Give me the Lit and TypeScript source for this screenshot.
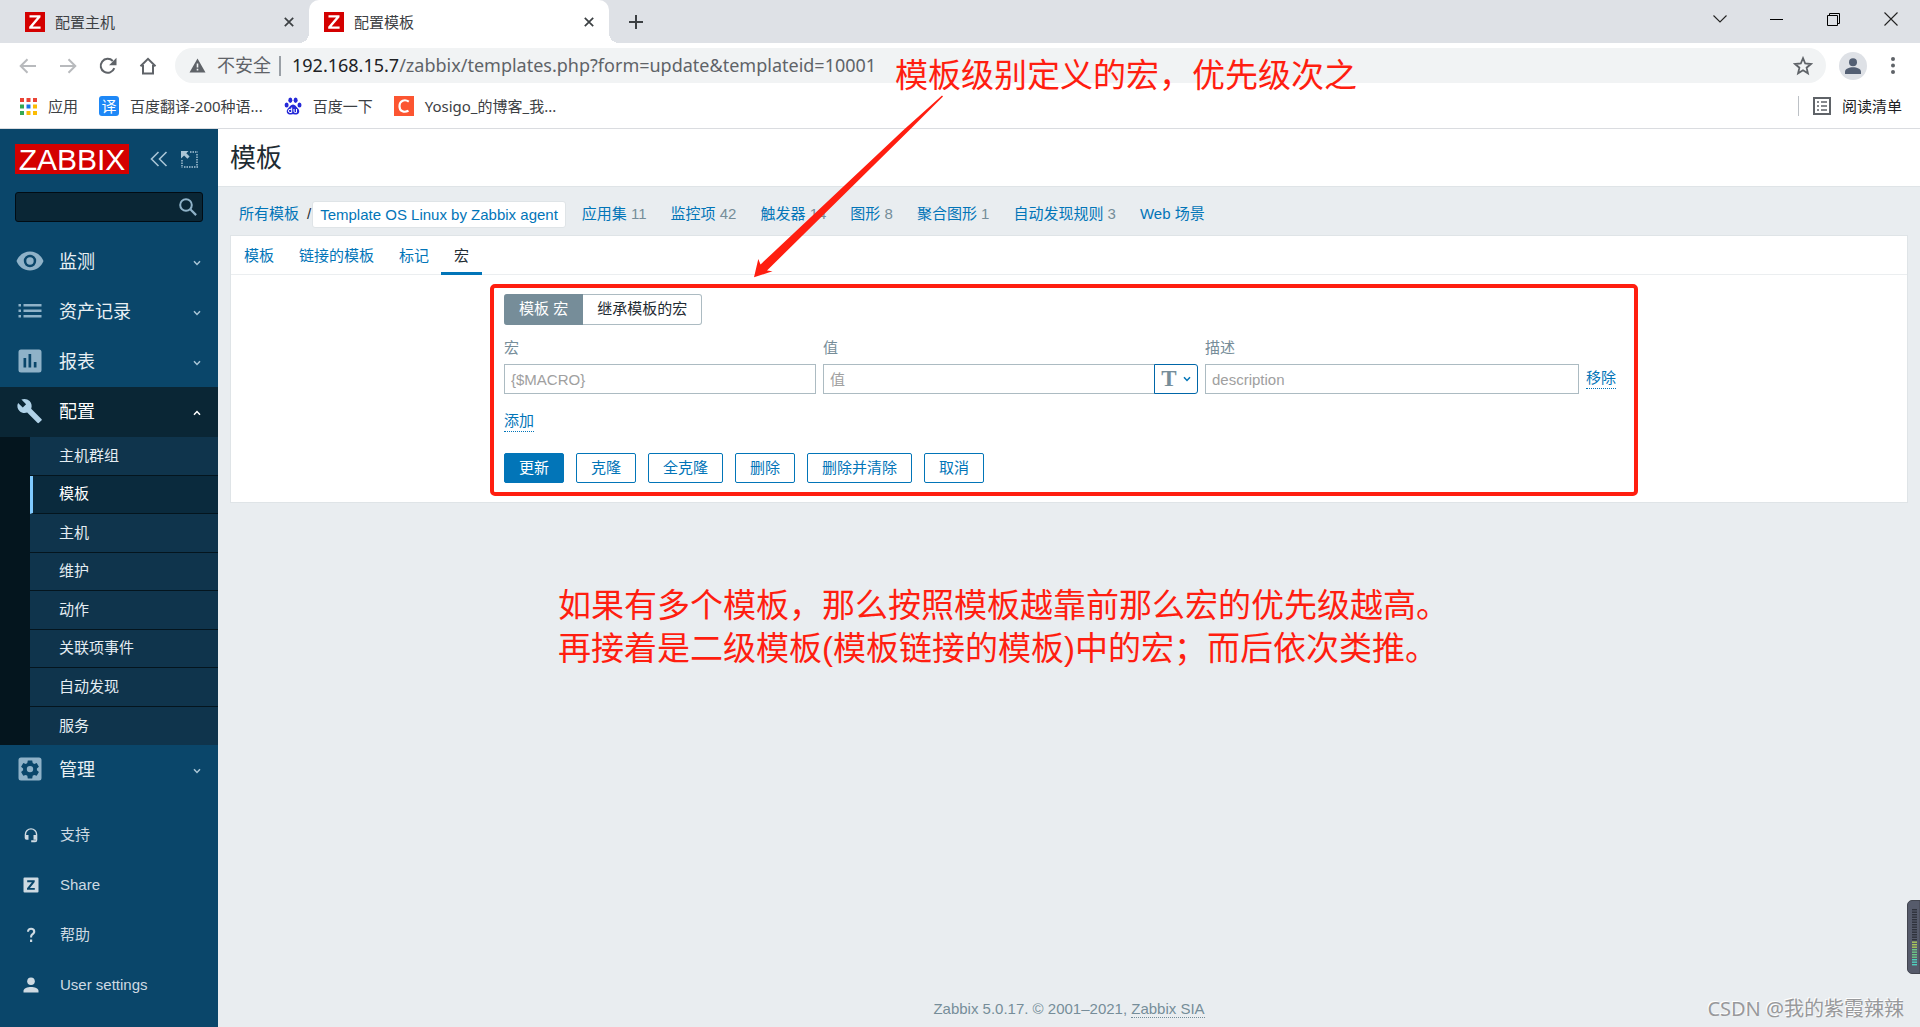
import { LitElement, html, css, svg } from "lit";
import { customElement, state } from "lit/decorators.js";
import { classMap } from "lit/directives/class-map.js";

const chevron = (up = false) => html`<svg class="chev" width="8" height="6" viewBox="0 0 8 6" aria-hidden="true">
  <path d=${up ? "M1 4.8 4 1.6 7 4.8" : "M1 1.2 4 4.4 7 1.2"} fill="none" stroke="currentColor" stroke-width="1.5" /></svg>`;

const menuIcons: Record<string, unknown> = {
  eye: svg`<path d="M14 4.5C8 4.5 2.7 8.300 .5 14c2.200 5.700 7.500 9.500 13.500 9.500S25.300 19.700 27.500 14C25.300 8.300 20 4.500 14 4.500Zm0 15.700a6.200 6.200 0 1 1 0-12.400 6.200 6.200 0 0 1 0 12.400Zm0-2.500a3.700 3.700 0 1 0 0-7.400 3.700 3.700 0 0 0 0 7.400Z"/>`,
  list: svg`<path d="M2.500 7h2.500v2.500H2.500zM2.500 12.500h2.500v2.500H2.500zM2.500 18h2.500v2.500H2.500zM7.500 7h18v2.500h-18zM7.500 12.500h18v2.500h-18zM7.500 18h18v2.500h-18z"/>`,
  chart: svg`<path fill-rule="evenodd" d="M5 2.500h18a2.500 2.500 0 0 1 2.500 2.500v18a2.500 2.500 0 0 1-2.500 2.500H5A2.500 2.500 0 0 1 2.500 23V5A2.500 2.500 0 0 1 5 2.500ZM7.500 11v9.500h2.700V11Zm5-4v13.500h2.700V7Zm5.300 8v5.500h2.700V15Z"/>`,
  wrench: svg`<path d="M25.400 21.900 15.200 11.700c1-2.600.5-5.600-1.600-7.700-2.200-2.200-5.500-2.700-8.200-1.400L10.100 7.300 6.800 10.500 2.100 5.900C.7 8.500 1.300 11.800 3.500 14c2.100 2.100 5.100 2.600 7.700 1.600l10.200 10.200c.5.500 1.200.500 1.600 0l2.400-2.400c.5-.4.500-1.200 0-1.500Z"/>`,
  gear: svg`<path fill-rule="evenodd" d="M5 2.500h18a2.500 2.500 0 0 1 2.500 2.500v18a2.500 2.500 0 0 1-2.500 2.500H5A2.500 2.500 0 0 1 2.500 23V5A2.500 2.500 0 0 1 5 2.500Zm6.800 2.900-.5 2.600-1.500.9-2.500-.9-2.200 3.800 2 1.700v1.800l-2 1.700 2.200 3.800 2.500-.9 1.500.9.500 2.600h4.400l.5-2.600 1.500-.9 2.500.9 2.200-3.800-2-1.700v-1.800l2-1.700-2.200-3.800-2.500.9-1.500-.9-.5-2.600Zm2.200 5.500a3.200 3.200 0 1 1 0 6.400 3.200 3.200 0 0 1 0-6.400Z"/>`,
};

const footIcons: Record<string, unknown> = {
  support: svg`<path d="M8 1.200A6.300 6.300 0 0 0 1.700 7.500V11a1.800 1.800 0 0 0 1.800 1.800h2V7.900H3.100v-.4a4.900 4.900 0 0 1 9.800 0v.4h-2.400v4.900h2.400v.5H8.200v1.900h3.900a2.200 2.200 0 0 0 2.200-2.200V7.500A6.300 6.300 0 0 0 8 1.200Z"/>`,
  share: svg`<path fill-rule="evenodd" d="M1.500.5h13a1 1 0 0 1 1 1v13a1 1 0 0 1-1 1h-13a1 1 0 0 1-1-1v-13a1 1 0 0 1 1-1ZM4.200 3.300v1.900h4.700L4 11.200v1.600h7.800v-1.900H6.900l4.800-6V3.300Z"/>`,
  help: svg`<path d="M4 4.800C4 2.300 5.700.8 8.100.8s4.200 1.400 4.200 3.600c0 1.700-.9 2.600-2 3.500-1 .8-1.200 1.200-1.200 2.500H7.100c0-2 .4-2.800 1.600-3.800.9-.7 1.400-1.200 1.400-2.100 0-1.100-.8-1.800-2-1.800-1.300 0-2 .8-2.100 2.100ZM7 12.600h2.200v2.300H7z"/>`,
  user: svg`<circle cx="8" cy="4.300" r="3.800"/><path d="M.5 15.500v-1.700C.5 11.300 4.500 10 8 10s7.500 1.300 7.500 3.800v1.700Z"/>`,
};

const FONT = css`"Liberation Sans", "Noto Sans CJK SC", sans-serif`;

@customElement("browser-chrome")
class BrowserChrome extends LitElement {
  static styles = css`
    :host { display: block; font: 15px/20px "Noto Sans", "Noto Sans CJK SC", sans-serif; color: #3c4043; background: #fff; }
    * { box-sizing: border-box; }
    button { border: 0; padding: 0; margin: 0; background: none; font: inherit; color: inherit; display: grid; place-items: center; }
    a { color: inherit; text-decoration: none; }
    .tabs { display: flex; height: 43px; background: #dee1e6; }
    .tab { display: flex; align-items: center; gap: 10px; width: 300px; padding: 0 11px 0 15px; }
    .tab:first-child { margin-left: 10px; width: 299px; }
    .tab.active { background: #fff; border-radius: 10px 10px 0 0; position: relative; }
    .tab.active::before, .tab.active::after { content: ""; position: absolute; bottom: 0; width: 10px; height: 10px; }
    .tab.active::before { left: -10px; background: radial-gradient(circle at 0 0, transparent 10px, #fff 10px); }
    .tab.active::after { right: -10px; background: radial-gradient(circle at 100% 0, transparent 10px, #fff 10px); }
    .tab span { flex: 1; }
    .tab button { width: 18px; height: 43px; }
    .plus { width: 54px; height: 43px; }
    .win { margin-left: auto; display: flex; padding-right: 1px; }
    .win button { width: 57px; height: 38px; }
    .bar { display: flex; align-items: center; height: 45px; padding: 0 14px 0 8px; }
    .bar > button { width: 40px; height: 36px; }
    .pill { display: flex; align-items: center; flex: 1; height: 35px; margin-left: 7px; border-radius: 18px; background: #f1f3f4; padding: 0 13px 0 14px; font-size: 18px; line-height: 24px; color: #5f6368; }
    .pill .warn { margin-right: 11px; }
    .pill span { padding-bottom: 2px; }
    .sep { width: 2px; height: 20px; background: #9aa0a6; margin: 0 11px 0 8px; }
    .url { flex: 1; min-width: 0; white-space: nowrap; overflow: hidden; }
    .url b { font-weight: 400; color: #202124; }
    .avatar { margin-left: 7px; }
    .bar > .dots { width: 26px; margin-left: 7px; }
    .marks { display: flex; align-items: center; height: 41px; padding: 0 18px 4px 20px; border-bottom: 1px solid #dadce0; }
    .marks a { display: flex; align-items: center; gap: 11px; margin-right: 21px; white-space: nowrap; }
    .marks .read { margin: 0 0 0 auto; padding-left: 14px; border-left: 1px solid #bdc1c6; color: #202124; }
  `;
  render() {
    const fav = html`<svg width="20" height="20" viewBox="0 0 20 20" aria-hidden="true"><rect width="20" height="20" fill="#d40000"/>
      <path d="M4.500 3.200h11v2L7.600 14.500h8v2.300H4.200v-2l7.900-9.300H4.500Z" fill="#fff"/></svg>`;
    const x = html`<svg width="10" height="10" viewBox="0 0 10 10"><path d="m.8.8 8.400 8.400M9.200.8.8 9.200" stroke="#3c4043" stroke-width="1.700"/></svg>`;
    return html`
      <div class="tabs">
        <div class="tab">${fav}<span>配置主机</span><button aria-label="关闭">${x}</button></div>
        <div class="tab active">${fav}<span>配置模板</span><button aria-label="关闭">${x}</button></div>
        <button class="plus" aria-label="新标签页"><svg width="14" height="14" viewBox="0 0 14 14"><path d="M7 0v14M0 7h14" stroke="#3c4043" stroke-width="2"/></svg></button>
        <div class="win">
          <button aria-label="搜索标签页"><svg width="14" height="8" viewBox="0 0 14 8"><path d="m.5.5 6.500 6.500L13.500.5" fill="none" stroke="#222" stroke-width="1.100"/></svg></button>
          <button aria-label="最小化"><svg width="13" height="13" viewBox="0 0 13 13"><path d="M0 6.500h13" stroke="#000"/></svg></button>
          <button aria-label="还原"><svg width="13" height="13" viewBox="0 0 13 13"><path d="M.5 2.500h10v10H.5zM2.500 2.500v-2h10v10h-2" fill="none" stroke="#000"/></svg></button>
          <button aria-label="关闭窗口"><svg width="14" height="14" viewBox="0 0 14 14"><path d="m.5.5 13 13m0-13-13 13" stroke="#222" stroke-width="1.100"/></svg></button>
        </div>
      </div>
      <div class="bar">
        <button aria-label="后退"><svg width="18" height="16" viewBox="0 0 18 16"><path d="M17 8H2M8.500 1.200 1.700 8l6.800 6.800" fill="none" stroke="#b8babd" stroke-width="2"/></svg></button>
        <button aria-label="前进"><svg width="18" height="16" viewBox="0 0 18 16"><path d="M1 8h15M9.500 1.200 16.300 8l-6.800 6.800" fill="none" stroke="#b8babd" stroke-width="2"/></svg></button>
        <button aria-label="刷新"><svg width="18" height="18" viewBox="0 0 18 18"><path d="M15.300 11.200A7 7 0 1 1 13.800 4" fill="none" stroke="#5f6368" stroke-width="2"/><path d="M17.500.8v7.400h-7.400Z" fill="#5f6368"/></svg></button>
        <button aria-label="主页"><svg width="18" height="18" viewBox="0 0 18 18"><path d="M4 8v8.500h10V8M1.500 9.200 9 1.800l7.500 7.400" fill="none" stroke="#5f6368" stroke-width="2"/></svg></button>
        <div class="pill">
          <svg class="warn" width="17" height="15" viewBox="0 0 17 15" aria-hidden="true"><path fill-rule="evenodd" d="M8.500.5 16.500 14.500H.5ZM7.700 5.500v4h1.600v-4Zm0 5.300v1.600h1.600v-1.600Z" fill="#5f6368"/></svg>
          <span>不安全</span><i class="sep"></i>
          <span class="url"><b>192.168.15.7</b>/zabbix/templates.php?form=update&amp;templateid=10001</span>
          <svg width="20" height="20" viewBox="0 0 20 20" aria-hidden="true"><path d="m10 2.200 2.200 5.300 5.700.5-4.300 3.700 1.300 5.600L10 14.300l-4.900 3 1.300-5.600L2.100 8l5.700-.5Z" fill="none" stroke="#5f6368" stroke-width="1.800"/></svg>
        </div>
        <button class="avatar" aria-label="用户"><svg width="28" height="28" viewBox="0 0 28 28"><circle cx="14" cy="14" r="14" fill="#dee1e6"/><circle cx="14" cy="10.300" r="4" fill="#535f73"/><path d="M6 22v-2.200c0-3 4-4.500 8-4.500s8 1.500 8 4.500V22Z" fill="#535f73"/></svg></button>
        <button class="dots" aria-label="菜单"><svg width="4" height="17" viewBox="0 0 4 17" fill="#5f6368"><circle cx="2" cy="2" r="2"/><circle cx="2" cy="8.500" r="2"/><circle cx="2" cy="15" r="2"/></svg></button>
      </div>
      <div class="marks">
        <a href="#"><svg width="17" height="17" viewBox="0 0 17 17" aria-hidden="true">
          <g fill="#ea4335"><path d="M0 0h4v4H0zM6.500 0h4v4h-4zM13 0h4v4h-4z"/></g>
          <path fill="#34a853" d="M0 6.500h4v4H0zM0 13h4v4H0z"/><path fill="#1a73e8" d="M6.500 6.500h4v4h-4z"/>
          <path fill="#fbbc04" d="M13 6.500h4v4h-4zM13 13h4v4h-4z"/><path fill="#fbbc04" d="M6.500 13h4v4h-4z"/></svg>应用</a>
        <a href="#"><svg width="20" height="20" viewBox="0 0 20 20" aria-hidden="true"><rect width="20" height="20" rx="3" fill="#1e88f7"/><text x="10" y="15.500" text-anchor="middle" font-size="15" fill="#fff">译</text></svg>百度翻译-200种语...</a>
        <a href="#"><svg width="18" height="18" viewBox="0 0 18 18" fill="#2529d8" aria-hidden="true">
          <ellipse cx="2.600" cy="8" rx="2" ry="2.600"/><ellipse cx="6.300" cy="3.200" rx="2" ry="2.700"/><ellipse cx="11.600" cy="3.200" rx="2" ry="2.700"/><ellipse cx="15.500" cy="8" rx="2" ry="2.600"/>
          <path d="M9 7.500c2.400 0 3 2.300 4.800 3.800 2.600 2.300 1.500 6.200-1.400 6.200-1.300 0-2-.3-3.400-.3s-2.100.3-3.400.3c-2.900 0-4-3.900-1.400-6.200C6 9.800 6.600 7.500 9 7.500Z"/>
          <path d="M7.700 10.500v5H6a1.600 1.600 0 0 1 0-3.200h1.700M10 12v2.300c0 .8.500 1.200 1.200 1.200h1.300V12" fill="none" stroke="#fff"/></svg>百度一下</a>
        <a href="#"><svg width="20" height="20" viewBox="0 0 20 20" aria-hidden="true"><rect width="20" height="20" fill="#fc5531"/><path d="M14.800 5.600C11 3 5.500 4.200 5.500 10.200c0 5.600 5 6.500 9 4.600" fill="none" stroke="#fff" stroke-width="2.200"/></svg>Yosigo_的博客_我...</a>
        <a class="read" href="#"><svg width="18" height="18" viewBox="0 0 18 18" aria-hidden="true"><path d="M1 1h16v16H1z" fill="none" stroke="#5f6368" stroke-width="2"/><path d="M4 5h2M4 9h2M4 13h2M8 5h6M8 9h6M8 13h6" stroke="#5f6368" stroke-width="1.600"/></svg>阅读清单</a>
      </div>`;
  }
}

@customElement("side-menu")
class SideMenu extends LitElement {
  static styles = css`
    :host { display: flex; flex-direction: column; width: 218px; flex: none; background: #0a466a; font: 15px/20px ${FONT}; color: #fff; }
    * { box-sizing: border-box; }
    a { color: inherit; text-decoration: none; }
    button { border: 0; padding: 0; background: none; display: grid; place-items: center; }
    .head { display: flex; align-items: center; height: 30px; margin: 15px 20px 18px 15px; }
    .logo { width: 114px; height: 30px; background: #d40000; color: #fff; font-size: 30px; line-height: 31px; text-align: center; margin-right: 21px; }
    .head button + button { margin-left: 13px; }
    .search { display: flex; align-items: center; height: 30px; margin: 0 15px; padding-right: 5px; background: #0a2635; border: 1px solid #010c14; border-radius: 3px; }
    .search input { flex: 1; min-width: 0; height: 28px; border: 0; background: none; color: #fff; font: inherit; outline: 0; padding: 0 8px; }
    .main { margin-top: 15px; }
    .item { display: flex; align-items: center; height: 50px; padding: 0 17px 0 16px; font-size: 18px; line-height: 24px; color: #e9f0f4; }
    .item span { flex: 1; margin-left: 15px; }
    .item .icon { fill: #8fb2c8; margin-bottom: 3px; }
    .item .chev { color: #a9c5d6; margin-top: 1px; }
    .item.open { background: #0a2635; color: #fff; }
    .item.open .icon { fill: #b0d2e8; }
    .item.open .chev { color: #fff; }
    .sub { display: grid; grid-auto-rows: 1fr; height: 308px; border-left: 30px solid #04151e; background: #0f344c; }
    .sub a { display: flex; align-items: center; padding-left: 29px; border-bottom: 1px solid #04151e; color: #e4edf2; }
    .sub a:last-child { border-bottom: 0; }
    .sub a.on { background: #0a2a3d; color: #fff; border-left: 3px solid #80caff; padding-left: 26px; }
    .foot { margin-top: 15px; padding-bottom: 17px; }
    .foot a { display: flex; align-items: center; height: 50px; padding-left: 23px; gap: 21px; color: #cedae2; }
    .foot svg { fill: #cedae2; }
  `;
  render() {
    const item = (icon: string, label: string, open = false) => html`<a href="#" class=${classMap({ item: true, open })}>
      <svg class="icon" width="28" height="28" viewBox="0 0 28 28" aria-hidden="true">${menuIcons[icon]}</svg><span>${label}</span>${chevron(open)}</a>`;
    const sub = ["主机群组", "模板", "主机", "维护", "动作", "关联项事件", "自动发现", "服务"];
    const foot = [["support", "支持"], ["share", "Share"], ["help", "帮助"], ["user", "User settings"]];
    return html`
      <div class="head">
        <a class="logo" href="#">ZABBIX</a>
        <button aria-label="折叠"><svg width="18" height="16" viewBox="0 0 18 16"><path d="M8.500 1 1.500 8l7 7M16.500 1l-7 7 7 7" fill="none" stroke="#a9c5d6" stroke-width="1.600"/></svg></button>
        <button aria-label="全屏"><svg width="17" height="17" viewBox="0 0 17 17"><path d="M9 1h8M16 3v12M1 9v8M3 16h14" fill="none" stroke="#a9c5d6" stroke-width="1.400" stroke-dasharray="1.500 1"/><path d="M0 0h7.500L5.300 2.200 8.600 5.500 6.400 7.700 3.100 4.400 0 7.500Z" fill="#a9c5d6"/></svg></button>
      </div>
      <form class="search" role="search">
        <input type="text" aria-label="搜索" />
        <button type="button" aria-label="搜索"><svg width="18" height="18" viewBox="0 0 18 18"><circle cx="7" cy="7" r="5.800" fill="none" stroke="#8fb2c8" stroke-width="2"/><path d="m11.300 11.300 5.800 5.800" stroke="#8fb2c8" stroke-width="2.200"/></svg></button>
      </form>
      <nav class="main">
        ${item("eye", "监测")}${item("list", "资产记录")}${item("chart", "报表")}${item("wrench", "配置", true)}
        <div class="sub">${sub.map((s) => html`<a href="#" class=${classMap({ on: s === "模板" })}>${s}</a>`)}</div>
        ${item("gear", "管理")}
      </nav>
      <nav class="foot">
        ${foot.map(([i, t]) => html`<a href="#"><svg width="16" height="16" viewBox="0 0 16 16" aria-hidden="true">${footIcons[i]}</svg>${t}</a>`)}
      </nav>`;
  }
}

@customElement("macro-form")
class MacroForm extends LitElement {
  @state() private scope = "own";
  static styles = css`
    :host { display: block; position: relative; width: fit-content; margin: 19px 0 19px 273px; font: 15px/20px ${FONT}; }
    * { box-sizing: border-box; }
    .frame { position: absolute; inset: -10px -22px -13px -14px; border: 4px solid #ff1e10; border-radius: 5px; pointer-events: none; }
    .seg { display: flex; width: fit-content; margin-bottom: 13px; }
    .seg label { height: 31px; line-height: 27px; padding: 0 14px; border: 1px solid #acbbc2; border-left: 0; border-radius: 0 3px 3px 0; color: #1f2c33; }
    .seg label:first-of-type { border-radius: 3px 0 0 3px; }
    .seg label.on { background: #768d99; border-color: #768d99; color: #fff; padding-left: 15px; }
    .seg input { position: absolute; opacity: 0; width: 1px; height: 1px; margin: 0; }
    .grid { display: grid; grid-template-columns: 312px 375px 374px auto; column-gap: 7px; row-gap: 6px; color: #768d99; }
    .grid input { width: 100%; height: 30px; padding: 0 6px; margin: 0; border: 1px solid #acbbc2; border-radius: 0; font: inherit; color: #1f2c33; outline: 0; background: #fff; }
    .grid input::placeholder { color: #a0a0a0; opacity: 1; }
    .value { display: flex; }
    .type { flex: none; display: flex; align-items: center; justify-content: center; gap: 6px; width: 44px; margin-left: -1px; height: 30px; padding: 0; border: 1px solid #0066a8; border-radius: 0 3px 3px 0; background: #fff; color: #0275b8; }
    .type b { font: bold 23px/26px "Liberation Serif", serif; color: #768d99; }
    .link { border: 0; border-bottom: 1px dotted #0275b8; padding: 0; background: none; font: inherit; line-height: 20px; color: #0275b8; height: 21px; }
    .remove { margin-top: 4px; }
    .add { display: block; margin: 17px 0 21px; }
    .actions { display: flex; gap: 12px; }
    .actions button { height: 30px; padding: 0 14px; border: 1px solid #0275b8; border-radius: 2px; background: #fff; color: #0275b8; font: inherit; }
    .actions .primary { background: #0275b8; color: #fff; }
  `;
  render() {
    const seg = (id: string, text: string) => html`<input type="radio" name="scope" id=${id} .checked=${this.scope === id} @change=${() => (this.scope = id)} />
      <label for=${id} class=${classMap({ on: this.scope === id })}>${text}</label>`;
    return html`<form @submit=${(e: Event) => e.preventDefault()}>
      <div class="seg">${seg("own", "模板 宏")}${seg("inherited", "继承模板的宏")}</div>
      <div class="grid">
        <label for="macro">宏</label><label for="value">值</label><label for="desc">描述</label><span></span>
        <input id="macro" type="text" placeholder="{$MACRO}" />
        <div class="value"><input id="value" type="text" placeholder="值" /><button class="type" type="button" aria-label="文本类型"><b>T</b>${chevron()}</button></div>
        <input id="desc" type="text" placeholder="description" />
        <div><button type="button" class="link remove">移除</button></div>
      </div>
      <button type="button" class="link add">添加</button>
      <div class="actions">
        <button class="primary">更新</button>
        ${["克隆", "全克隆", "删除", "删除并清除", "取消"].map((t) => html`<button type="button">${t}</button>`)}
      </div>
      <div class="frame"></div>
    </form>`;
  }
}

@customElement("app-root")
class AppRoot extends LitElement {
  static styles = css`
    :host { display: flex; flex-direction: column; position: relative; min-height: 100vh; overflow: hidden; background: #e9edf0; font: 15px/20px ${FONT}; color: #1f2c33; }
    * { box-sizing: border-box; }
    a { color: #0275b8; text-decoration: none; }
    .page { display: flex; flex: 1; }
    main { flex: 1; min-width: 0; display: flex; flex-direction: column; }
    .title { height: 58px; background: #fff; border-bottom: 1px solid #dfe4e7; padding: 1px 12px 0; }
    h1 { margin: 0; font-size: 26px; line-height: 57px; font-weight: 400; }
    .crumbs { display: flex; align-items: center; height: 48px; padding: 6px 21px 0; white-space: nowrap; }
    .slash { margin: 0 1px 0 8px; }
    .current { height: 27px; line-height: 25px; background: #fff; border: 1px solid #dfe4e7; border-radius: 3px; padding: 0 7px; margin-right: 16px; }
    .counted { margin-right: 24px; color: #768d99; }
    .card { margin: 0 12px; background: #fff; border: 1px solid #dfe4e7; }
    .tabs { display: flex; height: 39px; border-bottom: 1px solid #ebeef0; }
    .tabs a { height: 39px; line-height: 40px; padding: 0 13px; margin-right: -1px; }
    .tabs a.on { color: #1f2c33; border-bottom: 3px solid #0275b8; }
    footer { margin-top: auto; height: 28px; text-align: center; color: #768d99; }
    footer a { color: inherit; border-bottom: 1px dotted #768d99; }
    .note { position: absolute; margin: 0; font-size: 33px; line-height: 43px; color: #ff1e10; white-space: nowrap; }
    .top-note { left: 895px; top: 54px; }
    .mid-note { left: 558px; top: 584px; }
    .arrow { position: absolute; left: 750px; top: 90px; pointer-events: none; }
    .meter { position: absolute; right: 0; top: 900px; }
    .mark { position: absolute; right: 16px; bottom: 4px; font: 20px/28px "Noto Sans", "Noto Sans CJK SC", sans-serif; color: #98999b; text-shadow: -1px -1px 0 #fff; white-space: nowrap; }
  `;
  render() {
    const counts: [string, string][] = [["应用集", "11"], ["监控项", "42"], ["触发器", "14"], ["图形", "8"], ["聚合图形", "1"], ["自动发现规则", "3"], ["Web 场景", ""]];
    const bars = Array.from({ length: 23 }, (_, i) => i);
    return html`
      <browser-chrome></browser-chrome>
      <div class="page">
        <side-menu></side-menu>
        <main>
          <header class="title"><h1>模板</h1></header>
          <nav class="crumbs">
            <a href="#">所有模板</a><span class="slash">/</span><a class="current" href="#">Template OS Linux by Zabbix agent</a>
            ${counts.map(([t, n]) => html`<span class="counted"><a href="#">${t}</a> ${n}</span>`)}
          </nav>
          <section class="card">
            <nav class="tabs">${["模板", "链接的模板", "标记", "宏"].map((t) => html`<a href="#" class=${classMap({ on: t === "宏" })}>${t}</a>`)}</nav>
            <macro-form></macro-form>
          </section>
          <footer>Zabbix 5.0.17. © 2001–2021, <a href="#">Zabbix SIA</a></footer>
        </main>
      </div>
      <p class="note top-note">模板级别定义的宏，优先级次之</p>
      <p class="note mid-note">如果有多个模板，那么按照模板越靠前那么宏的优先级越高。<br />再接着是二级模板(模板链接的模板)中的宏；而后依次类推。</p>
      <svg class="arrow" width="200" height="190" viewBox="0 0 200 190" aria-hidden="true"><path d="M192 5.500 193 6.500 158 41.500 17 180.500 22.500 181.300 4 187.300 8.300 169 10.500 174.500 153.500 40Z" fill="#ff1e10"/></svg>
      <svg class="meter" width="13" height="74" viewBox="0 0 13 74" aria-hidden="true"><path d="M13 .5H5A4.500 4.500 0 0 0 .5 5v64A4.500 4.500 0 0 0 5 73.500h8Z" fill="#565b6b" stroke="#42454f"/>
        ${bars.map((i) => svg`<rect x="5" y=${9 + i * 2.5} width="5" height="1.400" fill=${i < 13 ? "#2f323c" : i < 16 ? "#a9c95a" : i < 20 ? "#6cc987" : "#4fd0bd"} />`)}</svg>
      <div class="mark">CSDN @我的紫霞辣辣</div>`;
  }
}
